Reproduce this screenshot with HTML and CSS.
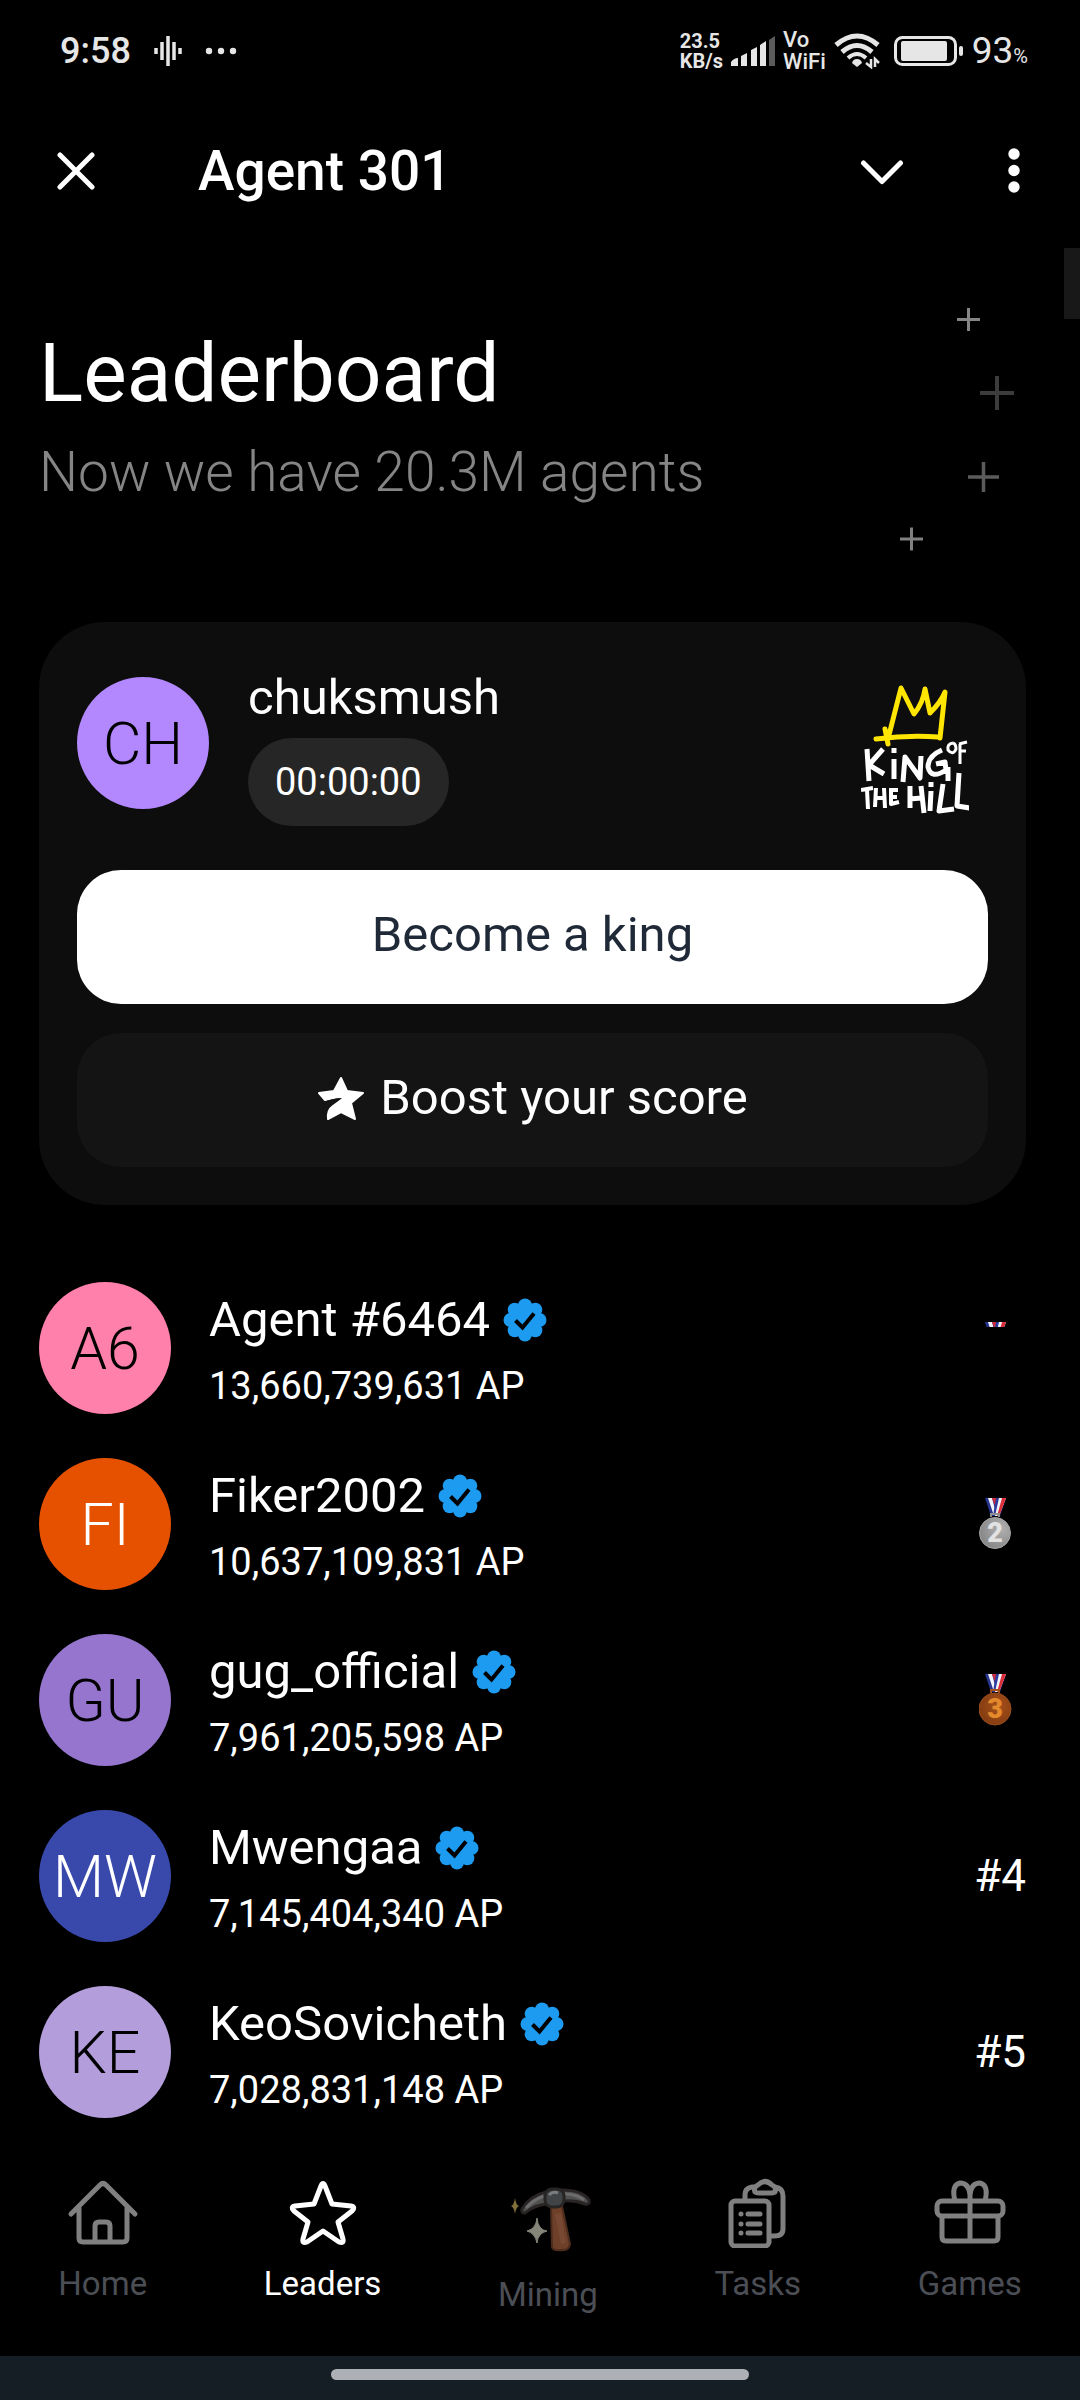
FILE: index.html
```html
<!DOCTYPE html>
<html lang="en">
<head>
<meta charset="utf-8">
<meta name="viewport" content="width=device-width, initial-scale=1">
<title>Agent 301</title>
<link rel="stylesheet" href="styles.css">
</head>
<body>
<svg class="defs" aria-hidden="true">
  <defs>
    <symbol id="verified" viewBox="0 0 44 44">
      <g fill="#1d9bf0">
        <circle cx="22" cy="22" r="17"/>
        <circle cx="22" cy="7.500" r="7"/><circle cx="32.300" cy="11.700" r="7"/><circle cx="36.500" cy="22" r="7"/><circle cx="32.300" cy="32.300" r="7"/>
        <circle cx="22" cy="36.500" r="7"/><circle cx="11.700" cy="32.300" r="7"/><circle cx="7.500" cy="22" r="7"/><circle cx="11.700" cy="11.700" r="7"/>
      </g>
      <path d="M12.500 22.500l7 7L31 15.500" fill="none" stroke="#000" stroke-width="4"/>
    </symbol>
    <symbol id="ribbon" viewBox="0 0 34 52">
      <path d="M6 0h10l4 18h-8z" fill="#28348f"/>
      <path d="M9 0h4l4 15-2 3z" fill="#f4f4fb"/>
      <path d="M13 0h4l1 13z" fill="#d22b35"/>
      <path d="M17 0h10l-6 18h-7z" fill="#2c3a9e"/>
      <path d="M20 0h7l-7 18h-4z" fill="#f4f4fb"/>
      <path d="M23 0h4l-6 16-3 2z" fill="#dd2f3a"/>
    </symbol>
    <radialGradient id="silver" cx=".7" cy=".35" r=".8"><stop offset="0" stop-color="#b0b0b0"/><stop offset="1" stop-color="#838383"/></radialGradient>
    <radialGradient id="bronze" cx=".6" cy=".4" r=".7"><stop offset="0" stop-color="#a8501a"/><stop offset="1" stop-color="#7f3a10"/></radialGradient>
  </defs>
</svg>

<header class="status">
  <div class="status-group">
    <span class="clock">9:58</span>
    <svg class="wave" viewBox="0 0 28 32" aria-hidden="true"><path d="M2 13v6M8 7v18M14 1v30M20 7v18M26 13v6" stroke="#e6e6e6" stroke-width="3.500"/></svg>
    <svg class="more" viewBox="0 0 32 8" aria-hidden="true"><g fill="#e6e6e6"><circle cx="4" cy="4" r="3.200"/><circle cx="16" cy="4" r="3.200"/><circle cx="28" cy="4" r="3.200"/></g></svg>
  </div>
  <div class="status-group status-right">
    <div class="speed"><span>23.5</span><span>KB/s</span></div>
    <svg class="signal" viewBox="0 0 44 30" aria-hidden="true"><g fill="#e6e6e6"><path d="M0 30v-4q3-4 7-4v8zM10 30V20l6-3v13zM20 30V14l6-3v19zM29 30V9l6-4v25z"/><path d="M38 30V4l6-4v30z" fill="#5c5c5c"/></g></svg>
    <div class="vowifi"><span>Vo</span><span>WiFi</span></div>
    <svg class="wifi" viewBox="0 0 46 36" aria-hidden="true">
      <g fill="none" stroke="#e6e6e6" stroke-width="5"><path d="M2 12q21-18 42 0"/><path d="M8 19q15-13 30 0"/><path d="M14 25q9-8 18 0" stroke-width="4"/></g>
      <path d="M23 34l-5-4q1-4 5-4t5 4z" fill="#e6e6e6"/>
      <path d="M37 26v8l-5-4M41 34v-8l4 4" fill="none" stroke="#e6e6e6" stroke-width="2.500"/>
    </svg>
    <svg class="battery" viewBox="0 0 70 30" aria-hidden="true"><rect x="1.500" y="1.500" width="60" height="27" rx="7" fill="none" stroke="#e6e6e6" stroke-width="3"/><rect x="7" y="5" width="46" height="20" rx="2" fill="#e6e6e6"/><rect x="65" y="10" width="4" height="10" rx="2" fill="#e6e6e6"/></svg>
    <span class="clock charge">93<small>%</small></span>
  </div>
</header>

<div class="appbar">
  <button class="icon-button" type="button" aria-label="Close"><svg width="38" height="40" viewBox="0 0 38 40"><path d="M3 4l32 32M35 4L3 36" stroke="#fff" stroke-width="5" stroke-linecap="round"/></svg></button>
  <h2 class="app-title">Agent 301</h2>
  <button class="icon-button" type="button" aria-label="Minimise"><svg width="44" height="30" viewBox="0 0 44 30"><path d="M3.500 7L22 25.500 40.500 7" fill="none" stroke="#fff" stroke-width="5" stroke-linecap="round" stroke-linejoin="round"/></svg></button>
  <button class="icon-button menu-button" type="button" aria-label="Menu"><svg width="12" height="46" viewBox="0 0 12 46"><g fill="#fff"><circle cx="6" cy="6" r="5.700"/><circle cx="6" cy="22.500" r="5.700"/><circle cx="6" cy="39" r="5.700"/></g></svg></button>
</div>

<main class="page">
  <div class="scroll-thumb"></div>
  <section class="hero">
    <div>
      <h1>Leaderboard</h1>
      <p>Now we have 20.3M agents</p>
    </div>
    <svg class="sparks" width="116" height="246" viewBox="0 0 116 246" aria-hidden="true">
      <g fill="none" stroke-width="3">
        <path d="M58 13.500h23M69.500 2v23" stroke="#858585"/>
        <path d="M81 87h34M98 70v34" stroke="#3c3c3c" stroke-width="4"/>
        <path d="M69 171h31M84.500 156v30" stroke="#5b5b5b" stroke-width="3.500"/>
        <path d="M1 233h23M12.500 221.500v23" stroke="#808080"/>
      </g>
    </svg>
  </section>

  <section class="card">
    <div class="king">
      <div class="avatar violet">CH</div>
      <div class="king-info">
        <div class="name">chuksmush</div>
        <div class="timer">00:00:00</div>
      </div>
      <svg class="king-logo" viewBox="0 0 108 132" role="img" aria-label="King of the Hill">
        <path d="M28 52L40 5l13 26q9-11 11-25l5 24q11-11 15-21L79 55M15 56q32-4 62-2M24 46l3 15" fill="none" stroke="#ffe600" stroke-width="5" stroke-linecap="round" stroke-linejoin="round"/>
        <g fill="none" stroke="#fff" stroke-width="5" stroke-linejoin="round">
          <path d="M6 66l2 32M22 66L8 82l15 9M33 76v20M33 65v5M42 99l2-25 15 21 1-22M81 67q-14 6-14 17 3 13 18 3l-1-8-9 2M87 84v14"/>
          <path d="M92 60q-6 1-5 7 5 6 8-1 0-5-3-6M99 61v20M98 61l8-2M99 68h6" stroke-width="3"/>
          <path d="M0 107l12-2M6 107l1 19M15 105l-1 19M23 105l1 20M15 115h9M30 105v16l8-2M30 114h6M30 107h7" stroke-width="4"/>
          <path d="M49 103v22M60 103l3 27M49 116l11-1M70 108l-1 20M70 99v5M82 101l-4 27 15-2M98 90l-2 33 13 2"/>
        </g>
      </svg>
    </div>
    <button class="button primary" type="button">Become a king</button>
    <button class="button secondary" type="button">
      <svg width="48" height="46" viewBox="0 0 48 46" aria-hidden="true"><path d="M24 3l6 13 16 2-12 10 4 16-14-7-13 7q-1-9 5-13 6-4 12-9-9 0-20 3L2 18l15-2z" fill="#fff" stroke="#fff" stroke-width="2" stroke-linejoin="round"/><path d="M5 28q10-5 20-5-9 4-17 12z" fill="#141414"/></svg>
      Boost your score
    </button>
  </section>

  <ol class="leaders">
    <li class="row">
      <div class="avatar pink">A6</div>
      <div class="row-info"><div class="name">Agent #6464 <svg class="badge"><use href="#verified"/></svg></div><div class="score">13,660,739,631 AP</div></div>
      <svg class="medal" viewBox="0 0 34 52" role="img" aria-label="First place"><svg width="34" height="5" viewBox="0 0 34 5"><use href="#ribbon" width="34" height="52"/></svg></svg>
    </li>
    <li class="row">
      <div class="avatar orange">FI</div>
      <div class="row-info"><div class="name">Fiker2002 <svg class="badge"><use href="#verified"/></svg></div><div class="score">10,637,109,831 AP</div></div>
      <svg class="medal" viewBox="0 0 34 52" role="img" aria-label="Second place"><use href="#ribbon" width="34" height="52"/><path d="M12 19v-3h8v3" stroke="#8f8f8f" stroke-width="2" fill="none"/><circle cx="16" cy="35" r="15.500" fill="url(#silver)" stroke="#a5a5a5"/><text x="16" y="44" class="medal-digit" fill="#e2e2e2">2</text></svg>
    </li>
    <li class="row">
      <div class="avatar purple">GU</div>
      <div class="row-info"><div class="name">gug_official <svg class="badge"><use href="#verified"/></svg></div><div class="score">7,961,205,598 AP</div></div>
      <svg class="medal" viewBox="0 0 34 52" role="img" aria-label="Third place"><use href="#ribbon" width="34" height="52"/><path d="M12 19v-3h8v3" stroke="#a3501d" stroke-width="2" fill="none"/><circle cx="16" cy="35" r="16" fill="url(#bronze)" stroke="#9c4e1e"/><text x="16" y="44" class="medal-digit" fill="#e58a2c">3</text></svg>
    </li>
    <li class="row">
      <div class="avatar indigo">MW</div>
      <div class="row-info"><div class="name">Mwengaa <svg class="badge"><use href="#verified"/></svg></div><div class="score">7,145,404,340 AP</div></div>
      <div class="rank">#4</div>
    </li>
    <li class="row">
      <div class="avatar lilac">KE</div>
      <div class="row-info"><div class="name">KeoSovicheth <svg class="badge"><use href="#verified"/></svg></div><div class="score">7,028,831,148 AP</div></div>
      <div class="rank">#5</div>
    </li>
  </ol>
</main>

<nav class="tabs">
  <a class="tab" href="#home">
    <svg width="72" height="72" viewBox="0 0 72 72" fill="none" stroke="#808080" stroke-width="5" stroke-linecap="round" stroke-linejoin="round" aria-hidden="true"><path d="M4 38L33 9q3-3 6 0L68 38M12 32v30q0 4 4 4h40q4 0 4-4V32M28 66V50q0-4 4-4h7q4 0 4 4v16"/></svg>
    <span>Home</span>
  </a>
  <a class="tab active" href="#leaders">
    <svg width="72" height="72" viewBox="0 0 72 72" fill="none" stroke="#fff" stroke-width="5" stroke-linejoin="round" aria-hidden="true"><path d="M34 10q2-5 4 0l7 18 19 2q5 1 1 5L51 46l5 17q1 5-4 3L36 55 20 66q-5 2-4-3l5-17L7 35q-4-4 1-5l19-2z"/></svg>
    <span>Leaders</span>
  </a>
  <a class="tab mining" href="#mining">
    <svg width="88" height="72" viewBox="0 0 88 72" aria-hidden="true">
      <path d="M47 19h11l8 38q-1 7-9 6-8 1-9-3z" fill="#6e402a" stroke="#4c2c1d" stroke-width="2"/>
      <path d="M51 27l6-1 5 30-5 1z" fill="#7a4d38" opacity=".7"/>
      <path d="M18 22Q26 9 42 5l1 12q-13 1-22 9-4 0-3-4z" fill="#505050" stroke="#292524" stroke-width="3"/>
      <path d="M58 3q20 0 27 10 1 5-4 4-10-4-22-3z" fill="#505050" stroke="#292524" stroke-width="3"/>
      <path d="M22 21q7-8 18-12M61 7q11 0 19 6" fill="none" stroke="#6c6c6c" stroke-width="3"/>
      <rect x="41" y="2" width="19" height="18" rx="7" fill="#414447" stroke="#272424" stroke-width="3"/>
      <path d="M45 8q4-4 9-2" stroke="#7a7d80" stroke-width="3" fill="none"/>
      <path d="M33 31q1 12 10 13-9 2-10 12-2-10-10-12 9-2 10-13z" fill="#85857a" stroke="#85857a"/>
      <path d="M11 11q1 7 4 8-3 1-4 8-1-7-4-8 3-1 4-8z" fill="#82703a"/>
    </svg>
    <span>Mining</span>
  </a>
  <a class="tab" href="#tasks">
    <svg width="72" height="72" viewBox="0 0 72 72" fill="none" stroke="#808080" stroke-width="5" stroke-linecap="round" stroke-linejoin="round" aria-hidden="true"><rect x="9" y="25" width="38" height="45" rx="4"/><path d="M23 24v-5q0-7 7-8h3M53 11q8 1 8 9v33q0 7-9 7h-3M33 16q-2-5 3-7 7-7 14 0 5 2 3 7-2 1-4 1H37q-3 0-4-1zM19 38h0M19 48h0M19 57h0M26 38h12M26 48h12M26 57h12"/></svg>
    <span>Tasks</span>
  </a>
  <a class="tab" href="#games">
    <svg width="72" height="72" viewBox="0 0 72 72" fill="none" stroke="#808080" stroke-width="5" stroke-linejoin="round" aria-hidden="true"><rect x="3" y="25" width="66" height="15" rx="5"/><path d="M8 40v21q0 4 4 4h48q4 0 4-4V40M36 65V17M21 25Q17 9 26 7q9 0 10 12Q37 7 46 7q9 2 5 18"/></svg>
    <span>Games</span>
  </a>
</nav>
<footer class="gesture"><div class="handle"></div></footer>
</body>
</html>
```
FILE: styles.css
```css
* { box-sizing: border-box; }

body {
  margin: 0;
  min-height: 100vh;
  display: flex;
  flex-direction: column;
  background: #000;
  color: #fff;
  font-family: Roboto, "Liberation Sans", sans-serif;
  font-size: 49px;
}

svg { display: block; flex: none; }
h1, h2, p, ol { margin: 0; padding: 0; font-weight: 400; }
button { border: 0; margin: 0; padding: 0; font: inherit; color: inherit; background: none; }
.defs { position: absolute; width: 0; height: 0; }

.status {
  display: flex;
  justify-content: space-between;
  height: 100px;
  padding: 2px 52px 0 60px;
  color: #e6e6e6;
}
.status-group { display: flex; align-items: center; gap: 23px; }
.status-right { gap: 8px; }
.clock { font-size: 36px; line-height: 44px; font-weight: 500; }
.charge { padding-top: 4px; font-size: 37px; font-weight: 400; }
.charge small { font-size: 20px; }
.wave { width: 28px; height: 32px; }
.more { width: 32px; height: 8px; }
.speed, .vowifi { display: flex; flex-direction: column; }
.speed { font-size: 20px; line-height: 20px; font-weight: 700; }
.signal { width: 44px; height: 30px; }
.vowifi { font-size: 22px; line-height: 22px; font-weight: 500; }
.wifi { width: 46px; height: 36px; margin-right: 6px; }
.battery { width: 70px; height: 30px; }

.appbar {
  display: flex;
  align-items: center;
  gap: 48px;
  height: 142px;
  padding: 0 56px 0 57px;
}
.app-title { flex: 1; padding-left: 55px; font-size: 55px; line-height: 64px; font-weight: 500; }
.icon-button { display: flex; }
.menu-button { padding: 0 4px 0 56px; }

.page { position: relative; flex: 1; padding: 64px 54px 26px 39px; }
.scroll-thumb { position: absolute; top: 6px; right: 0; width: 16px; height: 71px; background: #181818; }

.hero { display: flex; justify-content: space-between; padding-right: 11px; margin-bottom: 70px; }
.hero h1 { margin-top: 16px; font-size: 82px; line-height: 102px; }
.hero p { font-size: 55px; line-height: 96px; font-weight: 300; color: #858585; }

.card {
  display: flex;
  flex-direction: column;
  gap: 29px;
  padding: 38px;
  border-radius: 66px;
  background: #0d0d0d;
}
.king { display: flex; align-items: center; gap: 39px; padding: 0 19px 15px 0; }
.king-info { flex: 1; }
.king-logo { width: 108px; height: 132px; margin-top: 12px; }
.avatar {
  display: grid;
  place-items: center;
  flex: none;
  width: 132px;
  height: 132px;
  border-radius: 50%;
  color: #000;
  font-size: 59px;
  font-weight: 300;
}
.violet { background: #b388ff; }
.pink { background: #ff80ab; }
.orange { background: #e65100; color: #fff; }
.purple { background: #9575cd; }
.indigo { background: #3949ab; color: #fff; }
.lilac { background: #b39ddb; }

.name { display: flex; align-items: center; gap: 13px; line-height: 76px; }
.timer {
  width: max-content;
  margin-top: 2px;
  padding: 0 27px;
  border-radius: 44px;
  background: #262626;
  font-size: 38px;
  line-height: 88px;
}
.button {
  display: flex;
  align-items: center;
  justify-content: center;
  gap: 15px;
  height: 134px;
  padding-bottom: 5px;
  border-radius: 44px;
}
.primary { background: #fff; color: #1f2937; }
.secondary { background: #141414; }

.leaders { display: flex; flex-direction: column; gap: 44px; margin-top: 77px; list-style: none; }
.row { display: flex; align-items: center; gap: 38px; height: 132px; }
.row-info { flex: 1; }
.badge { width: 44px; height: 44px; }
.score { font-size: 38px; line-height: 56px; }
.medal { width: 34px; height: 52px; margin-right: 13px; }
.medal-digit { font-size: 27px; font-weight: 900; text-anchor: middle; }
.rank { font-size: 44px; }

.tabs { display: flex; justify-content: space-around; align-items: flex-start; height: 210px; padding-top: 30px; }
.tab {
  display: flex;
  flex-direction: column;
  align-items: center;
  gap: 16px;
  color: #4b4e55;
  font-size: 33px;
  line-height: 40px;
  text-decoration: none;
}
.active { color: #fff; }
.mining { padding-top: 11px; }

.gesture { display: flex; justify-content: center; height: 44px; padding-top: 13px; background: #151d25; }
.handle { width: 418px; height: 11px; border-radius: 6px; background: #adb1b5; }
```
